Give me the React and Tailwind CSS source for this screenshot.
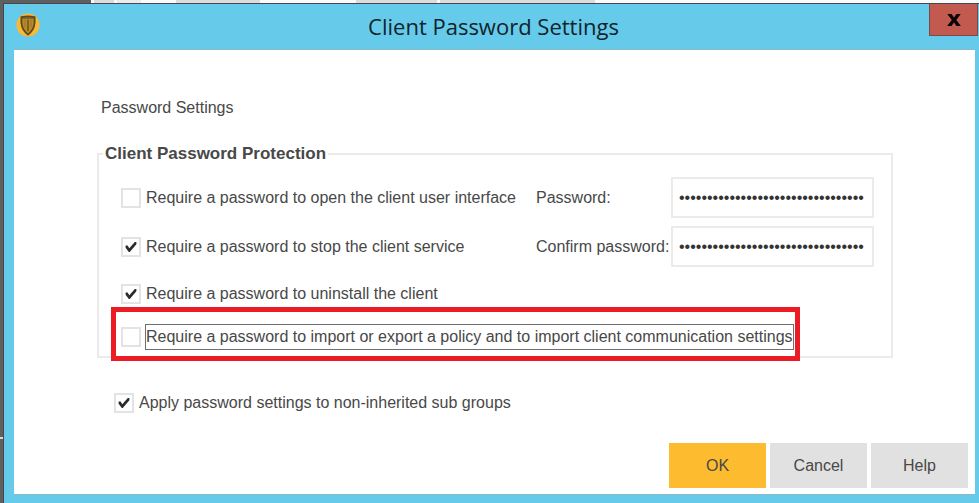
import React, { useState } from "react";

const Checkbox = ({ id, checked, onChange }) => (
  <span className="grid size-5 shrink-0 place-items-center">
    <input
      id={id}
      type="checkbox"
      checked={checked}
      onChange={onChange}
      className="col-start-1 row-start-1 size-5 appearance-none border-2 border-[#e3e3e3] bg-white outline-none"
    />
    {checked && (
      <svg
        viewBox="0 0 12 12"
        className="pointer-events-none col-start-1 row-start-1 size-3"
        aria-hidden="true"
      >
        <path
          d="M0.6 4.6 L2.6 4.6 L4.3 7.2 L9.8 0.9 L11.4 0.9 L11.4 3.2 L4.8 11 L3.8 11 L0.6 6.8 Z"
          fill="#2b2b2b"
        />
      </svg>
    )}
  </span>
);

const CheckRow = ({ id, label, checked, onChange, focused }) => (
  <div className={`flex items-center ${focused ? "gap-1" : "gap-[5px]"}`}>
    <Checkbox id={id} checked={checked} onChange={onChange} />
    <label
      htmlFor={id}
      className={`whitespace-nowrap leading-5 ${
        focused ? "border border-[#6f6f6f] py-0.5" : ""
      }`}
    >
      {label}
    </label>
  </div>
);

const PasswordField = ({ id, label, value, onChange }) => (
  <>
    <label htmlFor={id} className="whitespace-nowrap leading-5">
      {label}
    </label>
    <input
      id={id}
      type="password"
      value={value}
      onChange={onChange}
      className="h-[41px] w-full border-2 border-[#ebebeb] bg-white px-1.5 text-[#333] outline-none"
    />
  </>
);

const ShieldLogo = () => (
  <svg viewBox="0 0 24 24" className="size-6" aria-hidden="true">
    <circle cx="12" cy="12" r="11.6" fill="#f9b934" />
    <path
      d="M5.4 4.2 Q12 2.6 18.6 4.2 V10 Q18 17 12 21.6 Q6 17 5.4 10 Z"
      fill="#b9892b"
      stroke="#5c4a20"
      strokeWidth="1.8"
    />
    <path d="M6 5 H18" stroke="#5c4a20" strokeWidth="1" />
    <path d="M12 6.5 V18" stroke="#80621f" strokeWidth="2" />
    <path d="M9 6.5 V14 M15 6.5 V14" stroke="#9c772a" strokeWidth="1" />
  </svg>
);

export default function App() {
  const [checks, setChecks] = useState({
    open: false,
    stop: true,
    uninstall: true,
    policy: false,
    subgroups: true,
  });
  const [password, setPassword] = useState("x".repeat(33));
  const [confirm, setConfirm] = useState("x".repeat(33));

  const toggle = (key) => () =>
    setChecks((prev) => ({ ...prev, [key]: !prev[key] }));

  return (
    <div className="flex min-h-screen flex-col bg-[#5f5f5f] font-['Liberation_Sans',Arial,sans-serif] text-base text-[#484848]">
      {/* Strip of the window behind */}
      <div className="flex h-[3px] bg-[#fafafa]">
        <div className="w-[91px] bg-[#5f5f5f]" />
        <div className="ml-[3px] w-5 bg-[#dcdcdc]" />
        <div className="ml-[3px] w-6 bg-[#ececec]" />
        <div className="ml-[35px] w-[84px] bg-[#dcdcdc]" />
        <div className="ml-24 w-[81px] bg-[#dcdcdc]" />
        <div className="ml-[3px] w-[155px] bg-[#dcdcdc]" />
      </div>

      <div className="flex flex-1">
        <div className="flex w-[3px] flex-col justify-end pb-16">
          <div className="h-0.5 bg-[#d8d8d8]" />
        </div>

        {/* Dialog */}
        <div className="flex flex-1 flex-col border-t border-l border-[#404a4e] bg-[#66caea]">
          <header className="grid h-[45px] grid-cols-[1fr_auto_1fr] items-start">
            <div className="pt-[9px] pl-3">
              <ShieldLogo />
            </div>
            <h1 className="pl-1 font-['Open_Sans',sans-serif] text-[22px] leading-[44px] text-[#10242c]">
              Client Password Settings
            </h1>
            <button
              type="button"
              aria-label="Close"
              className="mr-px flex h-8 w-[49px] items-center justify-center justify-self-end border border-t-0 border-[#7d4a4c] bg-[#c25a50]"
            >
              <svg viewBox="0 0 14 12" className="h-3 w-3.5" aria-hidden="true">
                <path
                  d="M0.3 0 H4.6 L7 3.5 L9.5 0 H13.7 L9.3 6 L13.9 12 H9.5 L7 8.5 L4.5 12 H0.1 L4.8 6 Z"
                  fill="#0b0505"
                />
              </svg>
            </button>
          </header>

          <main className="mr-1 mb-2 ml-2.5 flex flex-1 flex-col border-t border-b border-[#8ab8c8] bg-white">
            <div className="pt-12 pr-[82px] pl-[83px]">
              <h2 className="pl-1 leading-5">Password Settings</h2>

              <fieldset className="mt-[26px] border-2 border-[#ebebeb] pr-[17px] pb-1.5 pl-[22px]">
                <legend className="-ml-[18px] px-0.5 text-[17px] leading-5 font-bold">
                  Client Password Protection
                </legend>

                <div className="grid grid-cols-[1fr_135px_203px] items-center gap-y-2 pt-[13px]">
                  <CheckRow
                    id="open"
                    label="Require a password to open the client user interface"
                    checked={checks.open}
                    onChange={toggle("open")}
                  />
                  <PasswordField
                    id="password"
                    label="Password:"
                    value={password}
                    onChange={(e) => setPassword(e.target.value)}
                  />
                  <CheckRow
                    id="stop"
                    label="Require a password to stop the client service"
                    checked={checks.stop}
                    onChange={toggle("stop")}
                  />
                  <PasswordField
                    id="confirm"
                    label="Confirm password:"
                    value={confirm}
                    onChange={(e) => setConfirm(e.target.value)}
                  />
                </div>

                <div className="mt-[17px]">
                  <CheckRow
                    id="uninstall"
                    label="Require a password to uninstall the client"
                    checked={checks.uninstall}
                    onChange={toggle("uninstall")}
                  />
                </div>

                <div className="relative mt-5 w-fit">
                  <CheckRow
                    id="policy"
                    label="Require a password to import or export a policy and to import client communication settings"
                    checked={checks.policy}
                    onChange={toggle("policy")}
                    focused
                  />
                  {/* Highlight around the import/export option */}
                  <div className="pointer-events-none absolute -top-[17px] -right-1.5 -bottom-[11px] -left-2.5 border-[5px] border-[#ed1c24]" />
                </div>
              </fieldset>

              <div className="mt-[35px] pl-[17px]">
                <CheckRow
                  id="subgroups"
                  label="Apply password settings to non-inherited sub groups"
                  checked={checks.subgroups}
                  onChange={toggle("subgroups")}
                />
              </div>
            </div>

            <footer className="mt-auto flex justify-end gap-1 pr-[7px] pb-1.5">
              <button type="button" className="h-[45px] w-[97px] bg-[#fdbb30]">
                OK
              </button>
              <button type="button" className="h-[45px] w-[97px] bg-[#e1e1e1]">
                Cancel
              </button>
              <button type="button" className="h-[45px] w-[97px] bg-[#e1e1e1]">
                Help
              </button>
            </footer>
          </main>
        </div>
      </div>
    </div>
  );
}
